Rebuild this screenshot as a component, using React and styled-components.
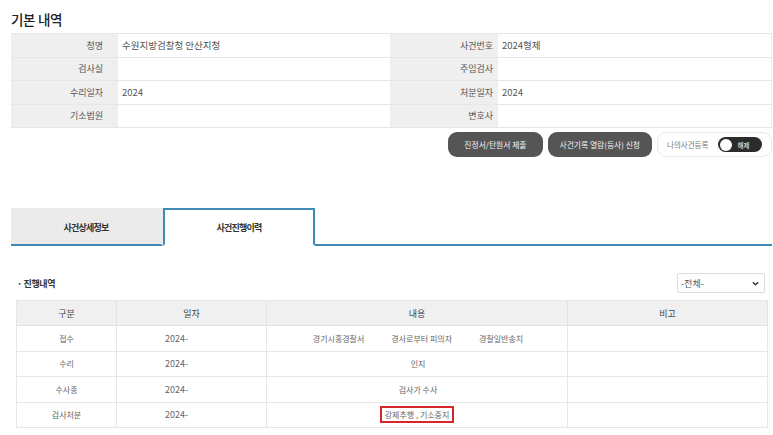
import React from 'react';
import styled, { createGlobalStyle } from 'styled-components';

const GlobalStyle = createGlobalStyle`
  html, body {
    margin: 0;
    padding: 0;
    background: #fff;
  }
  body {
    font-family: "Noto Sans CJK KR", "Noto Sans", sans-serif;
    color: #333;
  }
`;

const info = [
  ['청명', '수원지방검찰청 안산지청', '사건번호', '2024형제'],
  ['검사실', '', '주임검사', ''],
  ['수리일자', '2024', '처분일자', '2024'],
  ['기소법원', '', '변호사', ''],
];

const history = [
  { kind: '접수', date: '2024-', content: ['경기시흥경찰서', '경사로부터 피의자', '경찰일반송치'] },
  { kind: '수리', date: '2024-', content: ['인지'] },
  { kind: '수사종', date: '2024-', content: ['검사가 수사'] },
  { kind: '검사처분', date: '2024-', content: ['강제추행 , 기소중지'], marked: true },
];

const App = () => (
  <Page>
    <GlobalStyle />
    <Title>기본 내역</Title>
    <InfoTable>
      {info.map((row, i) => (
        <React.Fragment key={i}>
          <Label $pad={15}>{row[0]}</Label>
          <Value>{row[1]}</Value>
          <Label $pad={5}>{row[2]}</Label>
          <Value>{row[3]}</Value>
        </React.Fragment>
      ))}
    </InfoTable>

    <Actions>
      <DarkButton $pad={16}>진정서/탄원서 제출</DarkButton>
      <DarkButton $pad={12}>사건기록 열람(등사) 신청</DarkButton>
      <MyCase>
        나의사건등록
        <Toggle>
          <Knob />
          해제
        </Toggle>
      </MyCase>
    </Actions>

    <Tabs>
      <Tab>사건상세정보</Tab>
      <Tab $active>사건진행이력</Tab>
      <TabRest />
    </Tabs>

    <Section>
      <SectionHead>
        <SubTitle>· 진행내역</SubTitle>
        <Select>
          -전체-
          <Chevron viewBox="0 0 10 10">
            <path d="M2 3.5 L5 6.5 L8 3.5" fill="none" stroke="#333" strokeWidth="1.6" />
          </Chevron>
        </Select>
      </SectionHead>

      <HistoryTable>
        <HeadCell>구분</HeadCell>
        <HeadCell>일자</HeadCell>
        <HeadCell>내용</HeadCell>
        <HeadCell>비고</HeadCell>
        {history.map((h, i) => (
          <React.Fragment key={i}>
            <Cell>{h.kind}</Cell>
            <Cell $left>{h.date}</Cell>
            <Cell>
              {h.marked ? (
                <Marked>{h.content[0]}</Marked>
              ) : (
                <Content>
                  {h.content.map((c) => <span key={c}>{c}</span>)}
                </Content>
              )}
            </Cell>
            <Cell />
          </React.Fragment>
        ))}
      </HistoryTable>
    </Section>
  </Page>
);

const Page = styled.div`
  width: 773px;
  padding: 10px 1px 0 11px;
  box-sizing: border-box;
`;

const Title = styled.div`
  font-size: 13.5px;
  font-weight: 500;
  color: #222;
  line-height: 18px;
  margin-bottom: 5px;
  letter-spacing: -0.3px;
`;

const InfoTable = styled.div`
  display: grid;
  grid-template-columns: 107px 273px 107px 1fr;
  border-top: 1px solid #e6e6e6;
`;

const Label = styled.div`
  height: 22.5px;
  border-bottom: 1px solid #e6e6e6;
  background: #efefef;
  display: flex;
  align-items: center;
  justify-content: flex-end;
  padding-right: ${(p) => p.$pad}px;
  font-size: 9px;
  color: #555;
`;

const Value = styled.div`
  height: 22.5px;
  border-bottom: 1px solid #e6e6e6;
  border-right: 1px solid #eeeeee;
  display: flex;
  align-items: center;
  padding-left: 4px;
  font-size: 9.5px;
  color: #555;
`;

const Actions = styled.div`
  display: flex;
  justify-content: flex-end;
  align-items: center;
  gap: 5px;
  margin-top: 4px;
`;

const DarkButton = styled.div`
  height: 25px;
  padding: 0 ${(p) => p.$pad}px;
  border-radius: 9px;
  background: #555;
  color: #f4f4f4;
  font-size: 7.8px;
  display: flex;
  align-items: center;
`;

const MyCase = styled.div`
  width: 115px;
  height: 25px;
  box-sizing: border-box;
  border: 1px solid #e8e8e8;
  border-radius: 9px;
  display: flex;
  align-items: center;
  justify-content: space-between;
  padding: 0 9px 0 9px;
  font-size: 7.5px;
  color: #777;
`;

const Toggle = styled.div`
  width: 44px;
  height: 15px;
  border-radius: 8px;
  background: #2b2b2b;
  color: #fff;
  font-size: 6.5px;
  display: flex;
  align-items: center;
  gap: 6px;
  padding-left: 1.5px;
  box-sizing: border-box;
`;

const Knob = styled.span`
  width: 12px;
  height: 12px;
  border-radius: 50%;
  background: #fff;
`;

const Tabs = styled.div`
  display: flex;
  margin-top: 51px;
`;

const Tab = styled.div`
  width: 152px;
  height: 38px;
  box-sizing: border-box;
  display: flex;
  align-items: center;
  justify-content: center;
  font-size: 9px;
  font-weight: 700;
  letter-spacing: -0.8px;
  color: #333;
  background: ${(p) => (p.$active ? '#fff' : '#ebebeb')};
  border: 2px solid ${(p) => (p.$active ? '#3f8ab4' : 'transparent')};
  border-bottom: 2px solid ${(p) => (p.$active ? 'transparent' : '#3f8ab4')};
  border-left-width: ${(p) => (p.$active ? 2 : 0)}px;
`;

const TabRest = styled.div`
  flex: 1;
  border-bottom: 2px solid #3f8ab4;
`;

const Section = styled.div`
  padding: 0 4px 0 5px;
`;

const SectionHead = styled.div`
  display: flex;
  justify-content: space-between;
  align-items: center;
  margin-top: 27px;
`;

const SubTitle = styled.div`
  font-size: 9px;
  font-weight: 700;
  color: #333;
  letter-spacing: -0.4px;
  padding-left: 1px;
`;

const Select = styled.div`
  width: 88px;
  height: 20px;
  box-sizing: border-box;
  border: 1px solid #ddd;
  border-radius: 2px;
  margin-right: 3px;
  display: flex;
  align-items: center;
  justify-content: space-between;
  padding: 0 4px 0 3px;
  font-size: 9px;
  color: #555;
`;

const Chevron = styled.svg`
  width: 9px;
  height: 9px;
`;

const HistoryTable = styled.div`
  display: grid;
  grid-template-columns: 100px 150px 301px 1fr;
  margin-top: 7px;
  border-top: 1px solid #e6e6e6;
  border-left: 1px solid #e6e6e6;
`;

const HeadCell = styled.div`
  height: 24px;
  background: #f0f0f0;
  border-right: 1px solid #e2e2e2;
  border-bottom: 1px solid #e2e2e2;
  display: flex;
  align-items: center;
  justify-content: center;
  font-size: 9px;
  color: #444;
`;

const Cell = styled.div`
  height: 24.5px;
  border-right: 1px solid #e6e6e6;
  border-bottom: 1px solid #e6e6e6;
  display: flex;
  align-items: center;
  justify-content: ${(p) => (p.$left ? 'flex-start' : 'center')};
  padding-left: ${(p) => (p.$left ? 48 : 0)}px;
  font-size: ${(p) => (p.$left ? 9 : 8)}px;
  color: #666;
`;

const Content = styled.div`
  display: flex;
  gap: 27px;
  padding-left: 2px;
`;

const Marked = styled.span`
  border: 2px solid #d7262a;
  padding: 1px 3px;
  line-height: 11px;
`;

export default App;
